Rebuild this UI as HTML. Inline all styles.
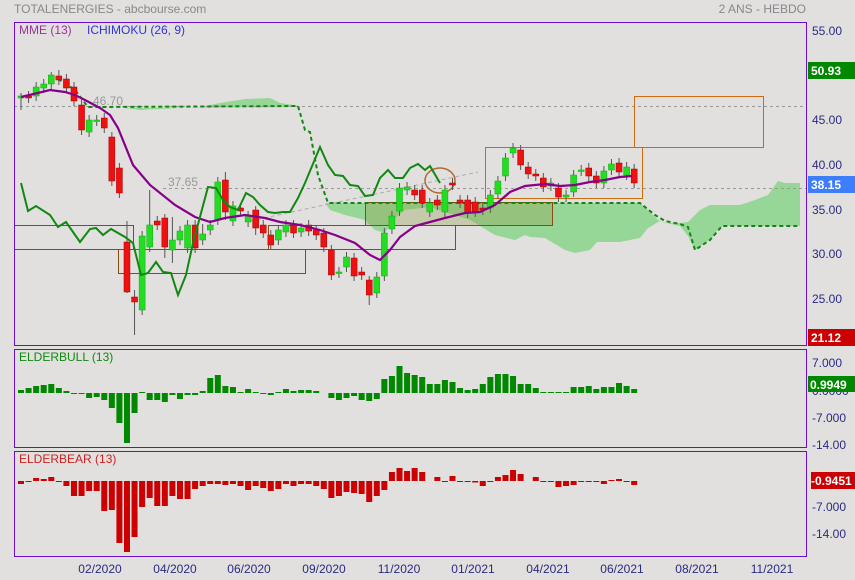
<!DOCTYPE html>
<html><head><meta charset="utf-8"><style>
html,body{margin:0;padding:0;background:#e1e0df;}
svg{display:block;font-family:"Liberation Sans",sans-serif;}
</style></head><body>
<svg id="s" width="855" height="580" xmlns="http://www.w3.org/2000/svg">
<rect width="855" height="580" fill="#e1e0df"/>
<text x="14" y="13" font-size="12" fill="#888">TOTALENERGIES - abcbourse.com</text>
<text x="806" y="13" font-size="12" fill="#888" text-anchor="end">2 ANS - HEBDO</text>
<g id="main"></g>
<rect x="14.5" y="22.5" width="792" height="323" fill="none" stroke="#6a0dcc" stroke-width="1"/>
<rect x="14.5" y="349.5" width="792" height="98" fill="none" stroke="#6a0dcc" stroke-width="1"/>
<rect x="14.5" y="451.5" width="792" height="105" fill="none" stroke="#6a0dcc" stroke-width="1"/>
<text x="19" y="34" font-size="12" fill="#993399">MME (13)</text>
<text x="87" y="34" font-size="12" fill="#3333dd">ICHIMOKU (26, 9)</text>
<text x="19" y="361" font-size="12" fill="#118811">ELDERBULL (13)</text>
<text x="19" y="463" font-size="12" fill="#cc2222">ELDERBEAR (13)</text>
<g font-size="12" fill="#2a2a80">
<text x="812" y="35">55.00</text><text x="812" y="124">45.00</text><text x="812" y="169">40.00</text>
<text x="812" y="214">35.00</text><text x="812" y="258">30.00</text><text x="812" y="303">25.00</text>
<text x="812" y="367">7.000</text><text x="812" y="395">0.0000</text><text x="812" y="422">-7.000</text><text x="812" y="449">-14.00</text>
<text x="812" y="511">-7.000</text><text x="812" y="538">-14.00</text>
</g>
<rect x="808" y="62" width="47" height="17" fill="#008800"/><text x="811" y="75" font-size="12" font-weight="bold" fill="#fff">50.93</text>
<rect x="808" y="176" width="47" height="17" fill="#3d7eff"/><text x="811" y="189" font-size="12" font-weight="bold" fill="#fff">38.15</text>
<rect x="808" y="329" width="47" height="17" fill="#cc0000"/><text x="811" y="342" font-size="12" font-weight="bold" fill="#fff">21.12</text>
<rect x="808" y="376" width="47" height="16" fill="#008800"/><text x="810" y="389" font-size="12" font-weight="bold" fill="#fff">0.9949</text>
<rect x="811" y="472" width="44" height="17" fill="#cc0000"/><text x="811" y="485" font-size="12" font-weight="bold" fill="#fff">-0.9451</text>
<g font-size="12" fill="#2a2a80" text-anchor="middle">
<text x="100" y="573">02/2020</text><text x="175" y="573">04/2020</text><text x="249" y="573">06/2020</text>
<text x="324" y="573">09/2020</text><text x="399" y="573">11/2020</text><text x="473" y="573">01/2021</text>
<text x="548" y="573">04/2021</text><text x="622" y="573">06/2021</text><text x="697" y="573">08/2021</text><text x="772" y="573">11/2021</text>
</g>
<text x="93" y="105" font-size="12" fill="#999">46.70</text>
<text x="168" y="186" font-size="12" fill="#999">37.65</text>
</svg>
<script>
var NS="http://www.w3.org/2000/svg",g=document.getElementById("main");
function el(t,a){var e=document.createElementNS(NS,t);for(var k in a)e.setAttribute(k,a[k]);g.appendChild(e);return e;}
function pts(a){return a.map(function(p){return p.join(",")}).join(" ");}
// clouds
el("polygon",{points:pts([[125,108],[140,110],[200,107],[220,103],[245,99],[270,98],[280,103],[300,106],[300,107],[125,108]]),fill:"#96d696"});
el("polygon",{points:pts([[325,203],[640,203],[650,212],[658,220],[665,223],[680,223],[688,222],[700,210],[710,205],[740,205],[755,200],[768,195],[778,181],[785,183],[800,183],[800,226],[723,226],[718,229],[712,238],[695,250],[688,236],[680,226],[670,224],[660,221],[648,228],[640,238],[620,242],[597,242],[590,250],[575,253],[565,250],[545,238],[530,237],[525,235],[515,240],[495,235],[470,220],[430,207],[405,210],[395,218],[385,233],[375,230],[365,220],[345,215],[330,210]]),fill:"#96d696"});
// dotted lines
el("line",{x1:14,y1:106.5,x2:806,y2:106.5,stroke:"#999","stroke-dasharray":"3,3"});
el("line",{x1:163,y1:188.5,x2:806,y2:188.5,stroke:"#999","stroke-dasharray":"3,3"});
el("line",{x1:250,y1:221,x2:478,y2:172,stroke:"#b0a8b0","stroke-dasharray":"4,3"});
// rects
el("rect",{x:365.5,y:202.5,width:187,height:23,fill:"rgba(150,160,80,0.35)",stroke:"#8b4a14"});
[[14.5,225.5,119,24],[118.5,249.5,187,24],[268.5,225.5,187,24]].forEach(function(r){el("rect",{x:r[0],y:r[1],width:r[2],height:r[3],fill:"none",stroke:"#8b4a14"});});
el("rect",{x:485.5,y:147.5,width:157,height:51,fill:"none",stroke:"#d06a10"});
el("rect",{x:634.5,y:96.5,width:129,height:51,fill:"none",stroke:"#d06a10"});
el("ellipse",{cx:440,cy:180.5,rx:15,ry:12.5,fill:"none",stroke:"#b06a30","stroke-width":1.5});
// kijun dashed
el("polyline",{points:pts([[58,79],[66,84],[75,90],[88,107],[100,107],[298,106],[305,130],[310,132],[318,175],[328,203],[640,203],[655,215],[665,221],[680,224],[688,227],[695,250],[710,240],[722,226],[800,226]]),fill:"none",stroke:"#118811","stroke-width":2,"stroke-dasharray":"4,3"});
// candles
var C=[[96,98,1,93,110],[96,98,0],[87,96,1],[84,88,1],[75,84,1,72],[76,80,0,70],[79,88,0],[87,101,0],[105,130,0],[120,132,1],[120,121,1],[118,128,0],[137,181,0],[168,193,0],[242,292,0,221,293],[297,302,0,290,335],[236,310,1],[225,247,1,190],[221,225,0],[218,247,0,214,258],[240,250,1,217,263],[231,240,1],[225,248,1],[225,248,0],[234,240,1,224],[225,230,1],[182,220,1],[180,212,0,172,220],[206,221,1],[208,211,0],[216,222,1],[210,228,0,206,235],[225,233,0],[235,245,0],[230,240,1],[225,232,1],[225,233,0],[228,232,1],[225,231,0],[230,235,0],[233,247,0],[250,275,0],[272,273,1],[257,267,1],[258,276,0],[272,275,0],[280,295,0,276,305],[277,293,1],[233,276,1],[216,229,1],[188,211,1],[187,190,1],[190,195,0],[190,203,0],[203,212,1],[200,205,0],[190,212,1],[183,185,0],[200,203,0],[200,213,0],[202,212,0],[208,210,0],[195,208,1],[181,194,1],[158,176,1],[148,153,1],[150,165,0],[167,174,0],[174,176,0],[178,187,0],[183,186,1],[188,197,0],[195,197,1],[175,192,1],[170,171,1],[168,176,0],[176,183,0],[171,183,1],[164,170,1],[163,172,0],[167,175,1],[169,183,0]];
function X(i){return 21+i*7.57;}
C.forEach(function(c,i){var x=X(i),t=c[3]||c[0]-5,b=c[4]||c[1]+5;
el("line",{x1:x,y1:t,x2:x,y2:b,stroke:"#555"});
el("rect",{x:x-3,y:c[0],width:6,height:Math.max(1.5,c[1]-c[0]),fill:c[2]?"#22dd22":"#ee1111",stroke:c[2]?"#11aa11":"#aa0000","stroke-width":0.5});});
// MME
el("polyline",{points:pts([[21,97],[50,90],[65,92],[75,95],[85,100],[100,108],[110,115],[118,128],[133,165],[150,185],[175,205],[195,217],[210,222],[225,218],[245,215],[265,218],[280,222],[300,225],[320,230],[335,235],[355,243],[370,255],[380,260],[390,250],[400,237],[415,226],[430,222],[445,218],[465,213],[480,212],[495,205],[510,192],[525,186],[545,184],[560,186],[575,185],[590,182],[605,180],[620,177],[632,176]]),fill:"none",stroke:"#880088","stroke-width":2.2});
// green line
el("polyline",{points:pts([[21,183],[28,211],[36,206],[50,215],[58,227],[66,222],[80,242],[90,229],[96,228],[103,235],[111,229],[125,237],[133,243],[141,275],[148,273],[156,262],[163,272],[171,273],[178,295],[186,275],[193,243],[208,187],[216,188],[223,200],[230,207],[238,210],[246,193],[253,197],[260,205],[268,212],[275,213],[283,212],[290,212],[298,198],[305,183],[320,147],[328,165],[335,175],[343,176],[350,185],[358,186],[365,196],[373,195],[380,178],[388,170],[395,178],[403,178],[410,168],[418,164],[425,170],[430,166],[440,183]]),fill:"none",stroke:"#118811","stroke-width":2});
// elder bull
var B=[3,5,7,8,9,5,2,-1,-1,-5,-4,-7,-15,-30,-50,-20,1,-7,-7,-9,-2,-6,-2,-2,2,15,18,7,6,1,4,1,-1,-2,1,4,2,3,3,2,0,-5,-7,-5,-3,-7,-8,-6,14,17,27,20,18,16,9,9,13,11,5,3,4,9,16,19,19,17,9,9,5,1,1,1,1,6,6,7,4,6,6,10,7,4];
B.forEach(function(v,i){if(!v)return;el("rect",{x:X(i)-3,y:v>0?393-v:393,width:6,height:Math.abs(v),fill:"#008800"});});
var R=[-3,-1,3,2,4,-1,-5,-15,-15,-10,-10,-30,-29,-62,-71,-56,-26,-17,-25,-25,-15,-18,-18,-8,-5,-3,-3,-4,-3,-5,-9,-5,-7,-10,-8,-3,-5,-3,-3,-5,-8,-17,-15,-11,-12,-13,-21,-15,-9,9,13,10,13,9,0,4,-1,5,-1,-1,-1.5,-5,-1,4,6,11,7,0,4,-1,-1,-6,-5,-4,-1,-1,-1,-3,1,2,-1,-4];
R.forEach(function(v,i){if(!v)return;el("rect",{x:X(i)-3,y:v>0?481-v:481,width:6,height:Math.abs(v),fill:"#cc0000"});});
</script>
</body></html>
